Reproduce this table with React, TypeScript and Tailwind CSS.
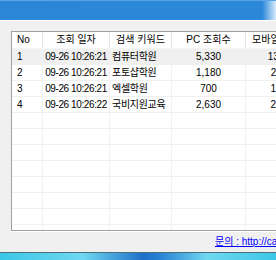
const rows = [
  { no: "1", date: "09-26 10:26:21", keyword: "컴퓨터학원", pc: "5,330", mobile: "13,950" },
  { no: "2", date: "09-26 10:26:21", keyword: "포토샵학원", pc: "1,180", mobile: "2,110" },
  { no: "3", date: "09-26 10:26:21", keyword: "엑셀학원", pc: "700", mobile: "1,540" },
  { no: "4", date: "09-26 10:26:22", keyword: "국비지원교육", pc: "2,630", mobile: "2,790" },
];

const emptyRows = Array.from({ length: 8 });

function Cells({ no, date, keyword, pc, mobile }: { no: string; date: string; keyword: string; pc: string; mobile: string }) {
  return (
    <>
      <div className="w-[31px] shrink-0 pl-[5px] border-r border-[#f0f0f0]">{no}</div>
      <div className="w-[67px] shrink-0 text-center tracking-[-0.4px] border-r border-[#f0f0f0]">{date}</div>
      <div className="w-[62px] shrink-0 pl-[2px] tracking-[-0.3px] border-r border-[#f0f0f0]">{keyword}</div>
      <div className="w-[74px] shrink-0 text-center border-r border-[#f0f0f0]">{pc}</div>
      <div className="w-[74px] shrink-0 text-center">{mobile}</div>
    </>
  );
}

export default function App() {
  return (
    <div className="w-[276px] h-[260px] overflow-hidden bg-[#f0f0f0] flex flex-col font-['Liberation_Sans','Noto_Sans_CJK_KR',sans-serif] text-[10px] text-black">
      {/* title bar */}
      <div className="h-[20px] shrink-0 border-t border-[#5aa3e6] bg-[linear-gradient(to_right,#2b86d6_0%,#2b88d8_95%,#d8ebfb_100%)]" />
      <div className="h-px shrink-0 bg-white" />

      {/* list view */}
      <div className="pt-[10px] pl-[11px]">
        <div className="w-[300px] h-[200px] overflow-hidden bg-white border-l border-t border-b border-[#a0a0a0] shadow-[0_1px_0_#ffffff]">
          <div className="flex h-[17px] items-center leading-none whitespace-nowrap border-b border-[#f5f5f5]">
            <div className="w-[31px] shrink-0 h-full flex items-center pl-[5px] border-r border-[#e5e5e5]">No</div>
            <div className="w-[67px] shrink-0 h-full flex items-center justify-center border-r border-[#e5e5e5]">조회 일자</div>
            <div className="w-[62px] shrink-0 h-full flex items-center justify-center border-r border-[#e5e5e5]">검색 키워드</div>
            <div className="w-[74px] shrink-0 h-full flex items-center justify-center border-r border-[#e5e5e5]">PC 조회수</div>
            <div className="w-[74px] shrink-0 h-full flex items-center pl-[6px] border-r border-[#e5e5e5]">모바일 조회수</div>
          </div>
          {rows.map((r, i) => (
            <div
              key={r.no}
              className={`flex h-[16px] items-center whitespace-nowrap border-b border-[#f0f0f0] ${i === 0 ? "bg-[#f0f0f0]" : ""}`}
            >
              <Cells {...r} />
            </div>
          ))}
          {emptyRows.map((_, i) => (
            <div key={i} className="flex h-[16px] border-b border-[#f0f0f0]">
              <Cells no="" date="" keyword="" pc="" mobile="" />
            </div>
          ))}
        </div>
      </div>

      {/* footer */}
      <div className="flex-1 flex items-center pl-[215px] whitespace-nowrap">
        <a className="text-[#0000ff] underline">문의 : http://cafe.naver.com</a>
      </div>

      {/* bottom strip */}
      <div className="h-px shrink-0 bg-[#4a6f7a]" />
      <div className="h-[7px] shrink-0 bg-[linear-gradient(to_right,#3cc6e6_0%,#6fd8f0_30%,#1f6fc8_52%,#2a82d4_58%,#6fd8f0_75%,#3cc6e6_100%)]" />
    </div>
  );
}
